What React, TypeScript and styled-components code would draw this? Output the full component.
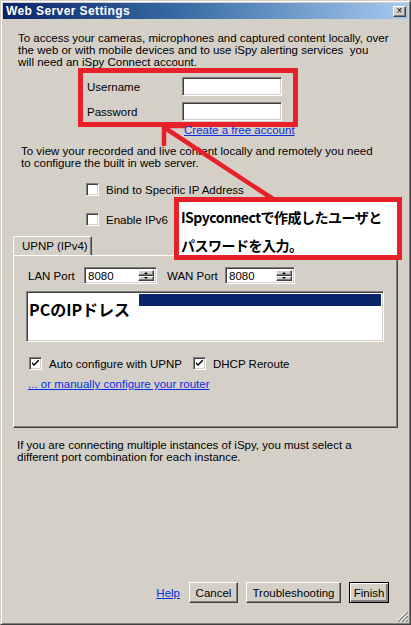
import React from 'react';
import styled, { createGlobalStyle, css } from 'styled-components';

const FACE = '#d4d0c8';
const RED = '#e8202a';
const LINK = '#0a2fe0';

const GlobalStyle = createGlobalStyle`
  html, body {
    margin: 0;
    padding: 0;
    background: ${FACE};
  }
  body {
    font-family: "Liberation Sans", Arial, "Noto Sans CJK JP", sans-serif;
    font-size: 11.5px;
    color: #000;
  }
  * {
    box-sizing: border-box;
  }
`;

const raised = css`
  border: 1px solid;
  border-color: #fff #404040 #404040 #fff;
  box-shadow: inset -1px -1px 0 #808080;
`;

const sunken = css`
  border: 1px solid;
  border-color: #808080 #fff #fff #808080;
  box-shadow: inset 1px 1px 0 #404040, inset -1px -1px 0 ${FACE};
`;

const Window = styled.div`
  position: relative;
  width: 411px;
  height: 625px;
  background: ${FACE};
  border: 1px solid;
  border-color: ${FACE} #404040 #404040 ${FACE};
  box-shadow: inset 1px 1px 0 #fff, inset -1px -1px 0 #808080;
  padding: 2px;
  display: flex;
  flex-direction: column;
  overflow: hidden;
`;

const TitleBar = styled.div`
  height: 16px;
  flex: none;
  display: flex;
  align-items: center;
  justify-content: space-between;
  padding: 0 2px 0 3px;
  background: linear-gradient(to right, #0a246a 0%, #3a6ea5 45%, #a6caf0 100%);
`;

const Title = styled.span`
  color: #fff;
  font-weight: bold;
  font-size: 12px;
  letter-spacing: 0.4px;
`;

const CloseButton = styled.div`
  ${raised};
  width: 13px;
  height: 11px;
  background: ${FACE};
  display: flex;
  align-items: center;
  justify-content: center;
  font-size: 10px;
  line-height: 1;
`;

const Body = styled.div`
  flex: 1;
  display: flex;
  flex-direction: column;
  padding: 0 10px 0 10px;
`;

const Paragraph = styled.p<{ $top: number; $left: number }>`
  margin: ${(p) => p.$top}px 0 0 ${(p) => p.$left}px;
  line-height: 12px;
  white-space: nowrap;
`;

const Credentials = styled.div`
  margin-left: 65px;
  width: 220px;
  height: 59px;
  border: 5px solid ${RED};
  padding: 4px 0 0 4px;
  display: flex;
  flex-direction: column;
  gap: 6px;
`;

const FieldRow = styled.div`
  display: flex;
  align-items: center;
  height: 19px;
`;

const FieldLabel = styled.span`
  width: 95px;
`;

const TextBox = styled.div<{ $width: number }>`
  ${sunken};
  width: ${(p) => p.$width}px;
  height: 100%;
  background: #fff;
`;

const Link = styled.a<{ $top: number; $left: number }>`
  display: block;
  margin: ${(p) => p.$top}px 0 0 ${(p) => p.$left}px;
  line-height: 12px;
  color: ${LINK};
  text-decoration: underline;
  white-space: nowrap;
`;

const CheckRow = styled.div<{ $top: number; $left: number }>`
  display: flex;
  align-items: center;
  height: 13px;
  margin: ${(p) => p.$top}px 0 0 ${(p) => p.$left}px;
`;

const CheckItem = styled.label<{ $width?: number }>`
  display: flex;
  align-items: center;
  gap: 7px;
  width: ${(p) => (p.$width ? `${p.$width}px` : 'auto')};
  white-space: nowrap;
`;

const Box = styled.span`
  ${sunken};
  width: 13px;
  height: 13px;
  background: #fff;
  flex: none;
  display: flex;
  align-items: center;
  justify-content: center;
`;

const Tabs = styled.div`
  margin-top: 10px;
`;

const TabStrip = styled.div`
  display: flex;
  height: 19px;
`;

const Tab = styled.div`
  width: 79px;
  height: 19px;
  border-top: 1px solid #fff;
  border-left: 1px solid #fff;
  border-right: 1px solid #404040;
  box-shadow: inset -1px 0 0 #808080;
  border-radius: 2px 2px 0 0;
  padding-left: 8px;
  display: flex;
  align-items: center;
  position: relative;
  z-index: 1;
  margin-bottom: -1px;
  background: ${FACE};
  white-space: nowrap;
`;

const TabPanel = styled.div`
  height: 173px;
  border: 1px solid;
  border-color: #fff #404040 #404040 #fff;
  box-shadow: inset -1px -1px 0 #808080;
  padding: 11px 11px 0 12px;
  display: flex;
  flex-direction: column;
`;

const PortRow = styled.div`
  display: flex;
  align-items: center;
  height: 17px;
`;

const PortLabel = styled.span<{ $width: number; $left: number }>`
  width: ${(p) => p.$width}px;
  margin-left: ${(p) => p.$left}px;
  white-space: nowrap;
`;

const Spinner = styled.div<{ $width: number }>`
  ${sunken};
  width: ${(p) => p.$width}px;
  height: 17px;
  background: #fff;
  display: flex;
  padding: 2px;
`;

const SpinValue = styled.span`
  flex: 1;
  padding-left: 1px;
  line-height: 13px;
`;

const SpinButtons = styled.div`
  width: 16px;
  display: flex;
  flex-direction: column;
`;

const SpinButton = styled.div<{ $up?: boolean }>`
  ${raised};
  flex: 1;
  background: ${FACE};
  display: flex;
  align-items: center;
  justify-content: center;

  &::after {
    content: '';
    border-left: 2px solid transparent;
    border-right: 2px solid transparent;
    ${(p) => (p.$up ? 'border-bottom: 2px solid #000;' : 'border-top: 2px solid #000;')}
  }
`;

const ListBox = styled.div`
  ${sunken};
  position: relative;
  margin-top: 7px;
  width: 358px;
  height: 51px;
  background: #fff;
  padding: 2px;
`;

const SelectedRow = styled.div`
  height: 12px;
  background: #0a246a;
`;

const Note = styled.div`
  position: absolute;
  left: 2px;
  top: 2px;
  width: 110px;
  height: 24px;
  background: #fff;
  padding: 5px 0 0 0;
  font-family: "Noto Sans CJK JP", sans-serif;
  font-weight: bold;
  font-size: 16px;
  line-height: 20px;
  white-space: nowrap;
`;

const Footer = styled.div`
  margin: auto 9px 19px 0;
  display: flex;
  justify-content: flex-end;
  align-items: center;
  gap: 8px;
`;

const HelpLink = styled.a`
  color: ${LINK};
  text-decoration: underline;
  margin-right: 1px;
`;

const Button = styled.button<{ $width: number; $default?: boolean }>`
  ${raised};
  width: ${(p) => p.$width}px;
  height: 21px;
  background: ${FACE};
  font-family: inherit;
  font-size: 11.5px;
  color: #000;
  padding: 0;
  ${(p) =>
    p.$default &&
    css`
      outline: 1px solid #000;
      outline-offset: -1px;
      box-shadow: inset 1px 1px 0 #fff, inset -2px -2px 0 #808080;
    `}
`;

const Callout = styled.div`
  position: absolute;
  left: 173px;
  top: 196px;
  width: 228px;
  height: 63px;
  border: 5px solid ${RED};
  background: #fff;
  padding: 1px 0 0 2px;
  font-family: "Noto Sans CJK JP", sans-serif;
  font-weight: bold;
  font-size: 14px;
  line-height: 28px;
  white-space: nowrap;
  letter-spacing: -0.5px;
`;

const Overlay = styled.svg`
  position: absolute;
  left: -1px;
  top: -1px;
  pointer-events: none;
`;

const Grip = styled.svg`
  position: absolute;
  right: 2px;
  bottom: 2px;
`;

function Check({ checked }: { checked?: boolean }) {
  return (
    <Box>
      {checked && (
        <svg width="7" height="7" viewBox="0 0 7 7">
          <path d="M0 2 L0 4 L2 6 L7 1 L7 -1 L2 4 Z" fill="#000" />
        </svg>
      )}
    </Box>
  );
}

function PortSpinner({ width, value }: { width: number; value: string }) {
  return (
    <Spinner $width={width}>
      <SpinValue>{value}</SpinValue>
      <SpinButtons>
        <SpinButton $up />
        <SpinButton />
      </SpinButtons>
    </Spinner>
  );
}

export default function App() {
  return (
    <>
      <GlobalStyle />
      <Window>
        <TitleBar>
          <Title>Web Server Settings</Title>
          <CloseButton>×</CloseButton>
        </TitleBar>
        <Body>
          <Paragraph $top={13} $left={5}>
            To access your cameras, microphones and captured content locally, over
            <br />
            the web or with mobile devices and to use iSpy alerting services&nbsp; you
            <br />
            will need an iSpy Connect account.
          </Paragraph>
          <Credentials>
            <FieldRow>
              <FieldLabel>Username</FieldLabel>
              <TextBox $width={100} />
            </FieldRow>
            <FieldRow>
              <FieldLabel>Password</FieldLabel>
              <TextBox $width={100} />
            </FieldRow>
          </Credentials>
          <Link $top={-3} $left={171}>Create a free account</Link>
          <Paragraph $top={9} $left={8}>
            To view your recorded and live content locally and remotely you need
            <br />
            to configure the built in web server.
          </Paragraph>
          <CheckRow $top={14} $left={73}>
            <CheckItem>
              <Check />
              Bind to Specific IP Address
            </CheckItem>
          </CheckRow>
          <CheckRow $top={17} $left={73}>
            <CheckItem>
              <Check />
              Enable IPv6
            </CheckItem>
          </CheckRow>
          <Tabs>
            <TabStrip>
              <Tab>UPNP (IPv4)</Tab>
            </TabStrip>
            <TabPanel>
              <PortRow>
                <PortLabel $width={56} $left={2}>LAN Port</PortLabel>
                <PortSpinner width={73} value="8080" />
                <PortLabel $width={58} $left={10}>WAN Port</PortLabel>
                <PortSpinner width={70} value="8080" />
              </PortRow>
              <ListBox>
                <SelectedRow />
                <Note>PCのIPドレス</Note>
              </ListBox>
              <CheckRow $top={15} $left={3}>
                <CheckItem $width={164}>
                  <Check checked />
                  Auto configure with UPNP
                </CheckItem>
                <CheckItem>
                  <Check checked />
                  DHCP Reroute
                </CheckItem>
              </CheckRow>
              <Link $top={8} $left={2}>... or manually configure your router</Link>
            </TabPanel>
          </Tabs>
          <Paragraph $top={11} $left={4}>
            If you are connecting multiple instances of iSpy, you must select a
            <br />
            different port combination for each instance.
          </Paragraph>
          <Footer>
            <HelpLink>Help</HelpLink>
            <Button $width={49}>Cancel</Button>
            <Button $width={95}>Troubleshooting</Button>
            <Button $width={40} $default>Finish</Button>
          </Footer>
        </Body>
        <Callout>
          ISpyconnectで作成したユーザと
          <br />
          パスワードを入力。
        </Callout>
        <Overlay width="411" height="625" viewBox="0 0 411 625">
          <path d="M164 146 L164 126 L186 126" fill="none" stroke={RED} strokeWidth="4.5" />
          <line x1="165" y1="128" x2="273" y2="199" stroke={RED} strokeWidth="4.5" />
        </Overlay>
        <Grip width="12" height="12" viewBox="0 0 12 12">
          <path d="M11 1 L1 11 M11 5 L5 11 M11 9 L9 11" stroke="#fff" strokeWidth="1" />
          <path d="M12 2 L2 12 M12 6 L6 12 M12 10 L10 12" stroke="#808080" strokeWidth="1.2" />
        </Grip>
      </Window>
    </>
  );
}
